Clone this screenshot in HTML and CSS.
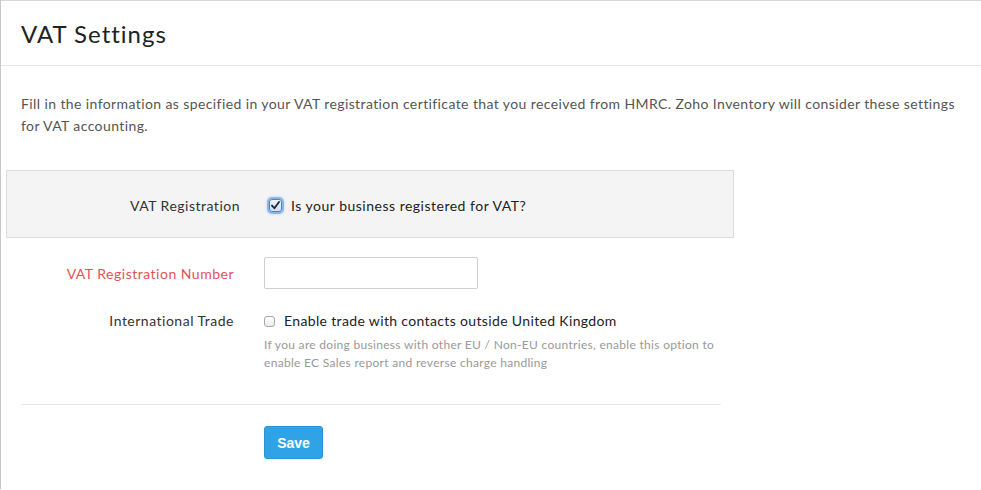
FILE: index.html
```html
<!DOCTYPE html>
<html>
<head>
<meta charset="utf-8">
<link rel="stylesheet" href="styles.css">
</head>
<body>
<div class="page">
  <div class="header"><h1 class="title">VAT Settings</h1></div>
  <p class="intro">Fill in the information as specified in your VAT registration certificate that you received from HMRC. Zoho Inventory will consider these settings for VAT accounting.</p>

  <div class="reg-box">
    <div class="row">
      <div class="label">VAT Registration</div>
      <label class="check">
        <span class="cb cb-checked">
          <svg width="9" height="9" viewBox="0 0 9 9"><path d="M1 4.6 L3.4 7.2 L8 1" fill="none" stroke="#1b2a4a" stroke-width="1.9" stroke-linecap="round" stroke-linejoin="round"/></svg>
        </span>
        <span>Is your business registered for VAT?</span>
      </label>
    </div>
  </div>

  <div class="form">
    <div class="row row-input">
      <div class="label label-req">VAT Registration Number</div>
      <div class="control"><span class="input"></span></div>
    </div>
    <div class="row row-trade">
      <div class="label">International Trade</div>
      <div class="control">
        <label class="check check-plain">
          <span class="cb"></span>
          <span>Enable trade with contacts outside United Kingdom</span>
        </label>
        <p class="help">If you are doing business with other EU / Non-EU countries, enable this option to enable EC Sales report and reverse charge handling</p>
      </div>
    </div>
  </div>

  <div class="divider"></div>
  <div class="actions"><button class="btn">Save</button></div>
</div>
</body>
</html>
```

FILE: styles.css
```css
html, body {
  margin: 0;
  padding: 0;
  background: #fff;
}
body {
  font-family: Lato, "Open Sans", "Liberation Sans", sans-serif;
  font-size: 14px;
  color: #333;
}
.page {
  height: 489px;
  border-top: 1px solid #d6d6d6;
  border-left: 1px solid #c8c8c8;
  box-sizing: border-box;
}
.header {
  height: 64px;
  border-bottom: 1px solid #e6e6e6;
  display: flex;
  align-items: center;
  padding-left: 20px;
}
.title {
  margin: 0;
  font-size: 24px;
  font-weight: 400;
  color: #222;
  letter-spacing: 1px;
}
.intro {
  margin: 27px 20px 0 20px;
  line-height: 22px;
  color: #555;
  font-size: 14px;
  letter-spacing: 0.4px;
}
.reg-box {
  margin: 33px 0 0 5px;
  width: 728px;
  background: #f4f4f4;
  border: 1px solid #dcdcdc;
  display: flex;
  align-items: center;
  padding-top: 3px;
  box-sizing: border-box;
  height: 68px;
}
.row {
  display: flex;
  align-items: center;
}
.label {
  width: 233px;
  text-align: right;
  color: #333;
  letter-spacing: 0.5px;
}
.reg-box .check {
  margin-left: 29px;
}
.check {
  display: flex;
  align-items: center;
  color: #222;
  letter-spacing: 0.5px;
}
.check-plain {
  letter-spacing: 0.35px;
  line-height: 18px;
}
.cb {
  width: 11px;
  height: 11px;
  border: 1px solid #a8a8a8;
  border-radius: 3px;
  background: linear-gradient(#fff, #ececec);
  box-sizing: border-box;
  margin-right: 9px;
  display: inline-flex;
  align-items: center;
  justify-content: center;
}
.cb-checked {
  width: 13px;
  height: 13px;
  border: 1px solid #4a7fd1;
  background: linear-gradient(#eef4fc, #cfe0f6);
  box-shadow: 0 0 0 2px rgba(90, 150, 230, 0.55), 0 0 3px 2px rgba(90, 150, 230, 0.35);
  margin-right: 9px;
}
.form {
  margin-top: 19px;
}
.label-req {
  color: #e0545a;
}
.control {
  margin-left: 30px;
}
.input {
  display: block;
  width: 214px;
  height: 32px;
  box-sizing: border-box;
  border: 1px solid #cfcfcf;
  border-radius: 2px;
  background: #fff;
}
.row-trade {
  align-items: flex-start;
  margin-top: 23px;
}
.row-trade .label {
  line-height: 18px;
}
.help {
  margin: 6px 0 0 0;
  width: 470px;
  font-size: 12px;
  line-height: 18px;
  color: #999;
  letter-spacing: 0.3px;
}
.divider {
  margin: 32px 0 0 20px;
  width: 700px;
  border-top: 1px solid #e6e6e6;
}
.actions {
  padding: 21px 0 0 263px;
}
.btn {
  width: 59px;
  height: 33px;
  background: #30a3e6;
  border: 1px solid #2a95d6;
  border-radius: 3px;
  color: #fff;
  font-family: "Liberation Sans", Arial, sans-serif;
  font-size: 14px;
  font-weight: 700;
  padding: 0;
}
```
